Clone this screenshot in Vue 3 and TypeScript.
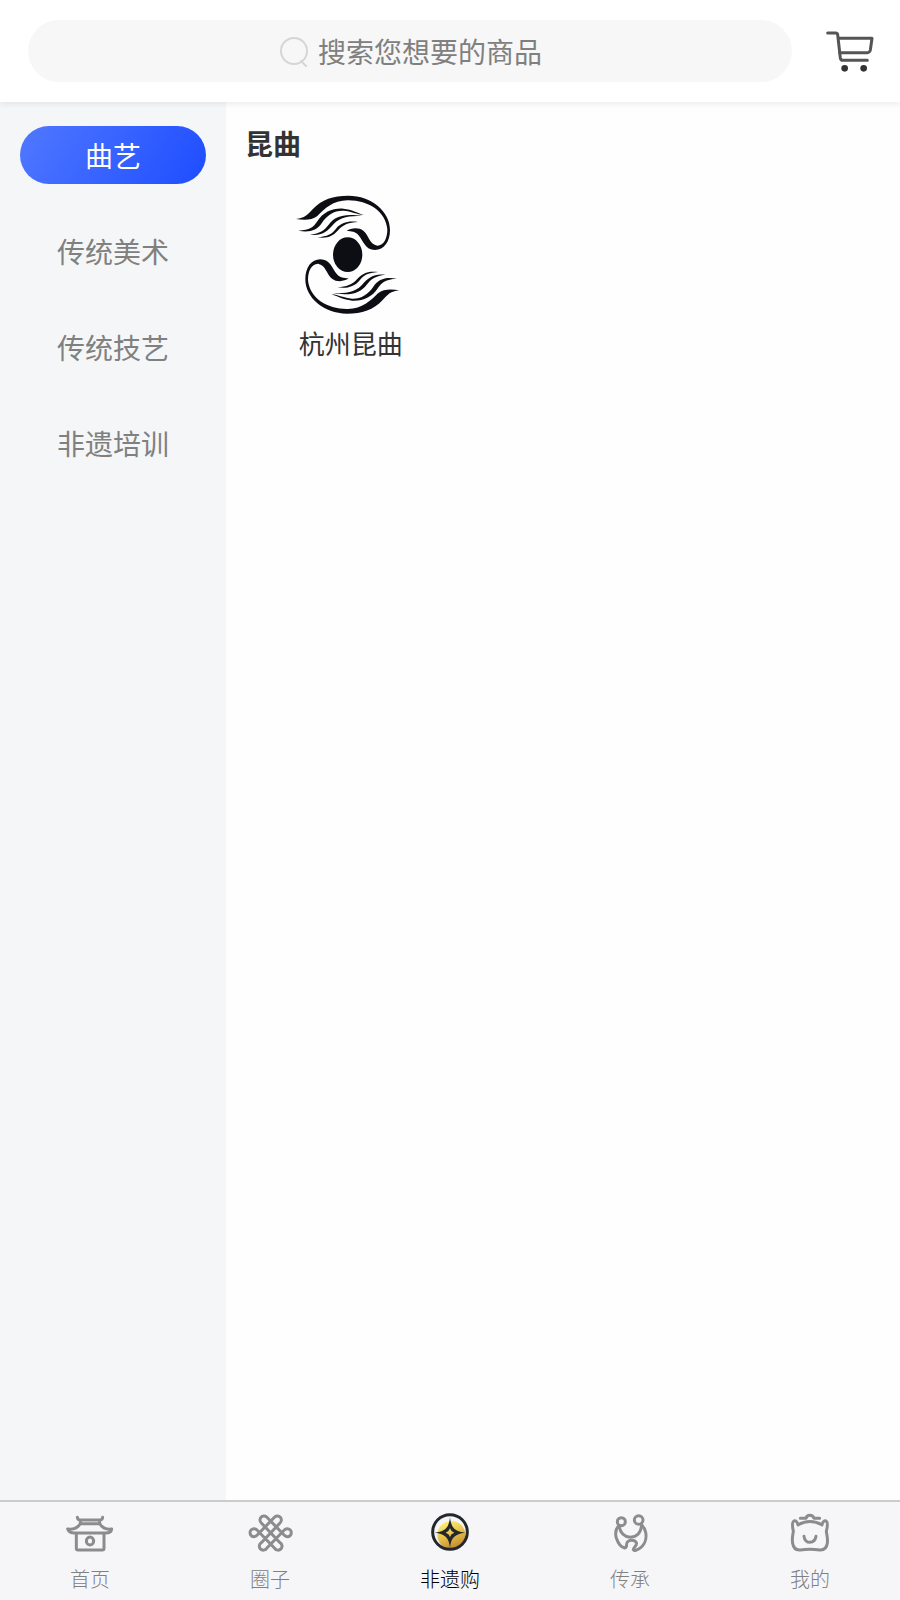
<script setup lang="ts">
import { ref } from 'vue'

interface Tab {
  id: string
  label: string
}

const keyword = ref('')
const categories: string[] = ['曲艺', '传统美术', '传统技艺', '非遗培训']
const activeCategory = ref('曲艺')

const tabs: Tab[] = [
  { id: 'home', label: '首页' },
  { id: 'circle', label: '圈子' },
  { id: 'shop', label: '非遗购' },
  { id: 'heritage', label: '传承' },
  { id: 'mine', label: '我的' },
]
const activeTab = ref('shop')
</script>

<template>
  <div class="page">
    <header class="topbar">
      <label class="search">
        <svg class="search-icon" viewBox="0 0 30 32" aria-hidden="true">
          <circle cx="16" cy="16" r="13" />
          <path d="M23 26l5 5" />
        </svg>
        <input v-model="keyword" class="search-input" type="text" placeholder="搜索您想要的商品" aria-label="搜索您想要的商品" />
      </label>
      <button class="cart" type="button" aria-label="购物车">
        <svg viewBox="0 0 144 126" aria-hidden="true">
          <path d="M5 9H29Q34 9 35 14L43 84Q44 91 51 91H124" />
          <path d="M38 25H138L133 60Q131 68 124 68H41" />
          <circle cx="56" cy="115" r="10" />
          <circle cx="113" cy="115" r="10" />
        </svg>
      </button>
    </header>

    <div class="body">
      <nav class="sidebar" aria-label="分类">
        <button
          v-for="name in categories"
          :key="name"
          type="button"
          class="category"
          :class="{ active: name === activeCategory }"
          @click="activeCategory = name"
        >
          {{ name }}
        </button>
      </nav>

      <main class="content">
        <h2 class="title">昆曲</h2>
        <div class="grid">
          <a class="item" href="#">
            <svg class="item-logo" viewBox="33 42 360 360" aria-hidden="true">
              <defs>
                <g id="hand">
                  <path d="M48 117C75 114 82 105 98 88C125 58 160 47 205 47C275 47 330 95 330 150C330 185 312 210 285 210C255 210 250 182 235 165C226 155 215 153 200 153C213 143 236 141 250 152C268 168 268 192 292 197C312 196 322 175 322 148C318 95 265 61 205 61C160 60 134 86 112 108C95 122 70 120 48 117Z" />
                  <path d="M55 152C90 150 100 142 112 124C130 96 158 84 190 86C218 89 230 98 252 105C230 103 214 94 190 92C163 91 142 105 126 128C110 152 88 158 55 152Z" />
                  <path d="M90 164C120 160 132 152 146 134C164 110 190 100 246 108C208 108 182 110 161 132C140 158 122 168 90 164Z" />
                  <path d="M112 172C144 168 154 164 168 146C184 128 204 122 234 126C206 128 190 133 175 150C158 169 142 176 112 172Z" />
                </g>
              </defs>
              <use href="#hand" />
              <use href="#hand" transform="rotate(180 203 224)" />
              <ellipse cx="203" cy="224" rx="44" ry="52" />
            </svg>
            <span>杭州昆曲</span>
          </a>
        </div>
      </main>
    </div>

    <nav class="tabbar" aria-label="主导航">
      <a
        v-for="tab in tabs"
        :key="tab.id"
        href="#"
        class="tab"
        :class="{ current: tab.id === activeTab }"
        @click.prevent="activeTab = tab.id"
      >
        <svg class="tab-icon" viewBox="0 0 144 144" aria-hidden="true">
          <g v-if="tab.id === 'home'">
            <path d="M34 28Q35 36 43 36H101Q109 36 110 28M43 36V47M101 36V47" />
            <path d="M43 47H101C109 60 122 65 137 63C136 71 130 75 119 75H25C14 75 8 71 5 63C20 65 35 60 43 47Z" />
            <path d="M31 76V121Q31 126 36 126H109Q114 126 114 121V76" />
            <ellipse cx="72" cy="99" rx="11" ry="12" />
          </g>
          <path
            v-else-if="tab.id === 'circle'"
            d="M62 27L115 82A12 12 0 1 0 115 66L62 121A12 12 0 1 1 46 104L102 45A12 12 0 1 0 86 27L33 82A12 12 0 1 1 33 66L86 121A12 12 0 1 0 102 104L46 45A12 12 0 1 1 62 27Z"
          />
          <g v-else-if="tab.id === 'shop'" class="coin">
            <defs>
              <linearGradient id="gold" x1="0.3" y1="0" x2="0.7" y2="1">
                <stop offset="0" stop-color="#fff272" />
                <stop offset="0.5" stop-color="#e6c04a" />
                <stop offset="1" stop-color="#c0842c" />
              </linearGradient>
            </defs>
            <circle cx="76" cy="81" r="42" fill="url(#gold)" />
            <circle class="ring" cx="72" cy="72" r="52" />
            <path
              fill="#24282b"
              fill-rule="evenodd"
              d="M72 28C75 58 86 71 118 74C86 77 75 90 72 120C69 90 58 77 26 74C58 71 69 58 72 28ZM72 61Q69 71 59 74Q69 77 72 87Q75 77 85 74Q75 71 72 61Z"
            />
          </g>
          <g v-else-if="tab.id === 'heritage'">
            <circle cx="46" cy="41" r="12" />
            <circle cx="98" cy="36" r="13" />
            <path d="M39 53C29 63 27 76 31 90C36 105 46 118 56 120C65 118 59 109 64 102C71 95 87 95 91 104C95 112 81 119 82 125C84 130 91 127 98 123C116 112 123 92 119 73C117 63 113 56 105 49" />
            <path d="M39 54C43 74 55 87 73 88C91 87 104 75 107 53" />
          </g>
          <g v-else>
            <path d="M36 51C34 41 29 37 24 39C16 43 20 61 22 70C21 79 17 91 20 106C22 120 31 127 43 126C58 124 86 124 101 126C114 127 122 120 124 106C126 91 122 79 121 70C123 61 128 43 120 39C115 37 110 41 108 51C86 37 58 37 36 51Z" />
            <path d="M43 31H60C63 19 80 19 84 31H101" />
            <path d="M54 85C57 109 86 109 90 85" />
          </g>
        </svg>
        <span>{{ tab.label }}</span>
      </a>
    </nav>
  </div>
</template>

<style>
body {
  margin: 0;
}
</style>

<style scoped>
.page {
  display: flex;
  flex-direction: column;
  min-height: 100vh;
  background: #fefefe;
  color: #333;
  font-family: "Noto Sans CJK SC", sans-serif;
}

button {
  border: 0;
  padding: 0;
  background: none;
  font: inherit;
  color: inherit;
  cursor: pointer;
}

.topbar {
  display: flex;
  align-items: center;
  gap: 34px;
  padding: 20px 26px 20px 28px;
  background: #fff;
  box-shadow: 0 2px 6px rgba(0, 0, 0, 0.08);
  z-index: 1;
}

.search {
  flex: 1;
  display: flex;
  align-items: center;
  justify-content: center;
  gap: 10px;
  height: 62px;
  border-radius: 31px;
  background: #f7f7f7;
}

.search-icon {
  width: 30px;
  height: 32px;
  fill: none;
  stroke: #d6d6d6;
  stroke-width: 2;
  stroke-linecap: round;
}

.search-input {
  box-sizing: border-box;
  width: 8em;
  padding: 0;
  border: 0;
  outline: 0;
  background: transparent;
  font: inherit;
  font-size: 28px;
  line-height: 40px;
  color: #333;
}

.search-input::placeholder {
  color: #808080;
  opacity: 1;
}

.cart {
  width: 48px;
  height: 42px;
}

.cart svg {
  display: block;
  width: 100%;
  fill: none;
  stroke: #555;
  stroke-width: 9;
  stroke-linecap: round;
  stroke-linejoin: round;
}

.cart circle {
  fill: #333;
  stroke: none;
}

.body {
  flex: 1;
  display: flex;
}

.sidebar {
  flex: 0 0 226px;
  box-sizing: border-box;
  display: flex;
  flex-direction: column;
  gap: 38px;
  padding: 24px 20px;
  background: #f4f6f8;
}

.category {
  height: 58px;
  border-radius: 29px;
  font-size: 28px;
  line-height: 58px;
  color: #808080;
}

.category.active {
  background: linear-gradient(120deg, #5078ff, #1e4dff);
  color: #fff;
}

.content {
  flex: 1;
  padding: 20px 20px 20px 19px;
}

.title {
  margin: 0;
  font-size: 28px;
  line-height: 42px;
  font-weight: 700;
}

.grid {
  display: grid;
  grid-template-columns: repeat(3, 1fr);
  padding-top: 30px;
}

.item {
  display: flex;
  flex-direction: column;
  align-items: center;
  gap: 9px;
  font-size: 26px;
  line-height: 40px;
  color: #333;
  text-decoration: none;
}

.item-logo {
  width: 120px;
  height: 120px;
  fill: #0d0d14;
}

.tabbar {
  display: flex;
  box-sizing: border-box;
  height: 100px;
  border-top: 2px solid #ccc;
  background: #f6f6f9;
}

.tab {
  flex: 1;
  display: flex;
  flex-direction: column;
  align-items: center;
  gap: 8px;
  padding-top: 6px;
  font-size: 20px;
  line-height: 30px;
  font-weight: 300;
  color: #808080;
  text-decoration: none;
}

.tab.current {
  color: #000;
}

.tab-icon {
  width: 48px;
  height: 48px;
  fill: none;
  stroke: #8c8c8c;
  stroke-width: 9;
  stroke-linecap: round;
  stroke-linejoin: round;
}

.coin {
  stroke: none;
}

.ring {
  stroke: #24282b;
  stroke-width: 9;
}
</style>
